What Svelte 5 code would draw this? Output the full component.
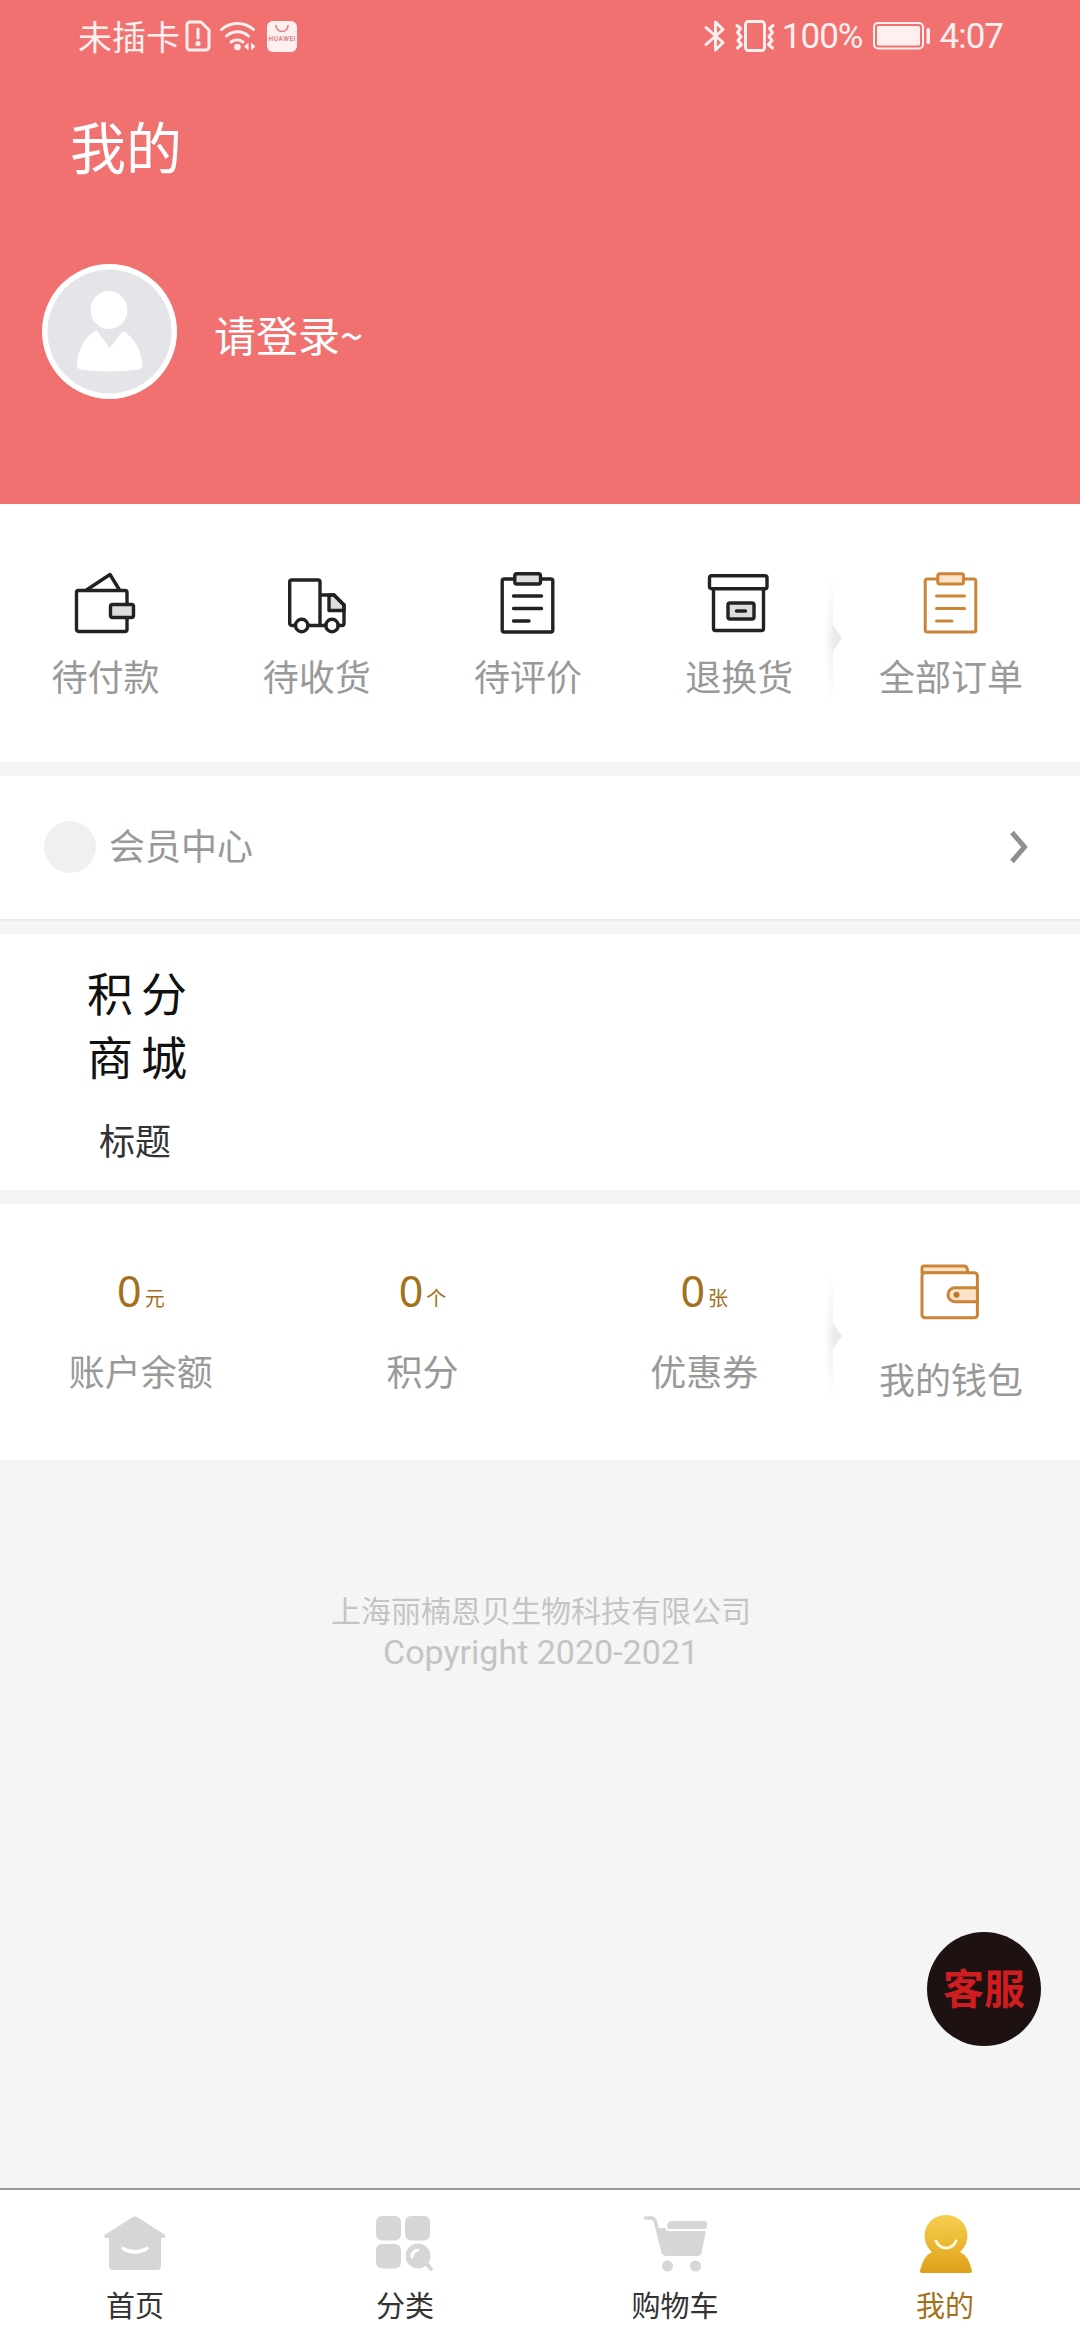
<script lang="ts">
  type Order = { icon: string; label: string };
  type Balance = { value: number; unit: string; label: string };

  const orders: Order[] = [
    { icon: 'pay', label: '待付款' },
    { icon: 'truck', label: '待收货' },
    { icon: 'clipboard', label: '待评价' },
    { icon: 'box', label: '退换货' }
  ];

  const balances: Balance[] = [
    { value: 0, unit: '元', label: '账户余额' },
    { value: 0, unit: '个', label: '积分' },
    { value: 0, unit: '张', label: '优惠券' }
  ];

  const tabs = [
    { icon: 'home', label: '首页' },
    { icon: 'category', label: '分类' },
    { icon: 'cart', label: '购物车' },
    { icon: 'me', label: '我的' }
  ];

  let current = $state('me');
</script>

{#snippet clipboard()}
  <path d="M18.8 9H8.2a2 2 0 0 0-2 2v49a2 2 0 0 0 2 2h46.6a2 2 0 0 0 2-2V11a2 2 0 0 0-2-2H44.5" />
  <rect class="tint" x="18.8" y="3.7" width="25.7" height="10.3" rx="2" />
  <path d="M17.5 26h28M17.5 38.5h28M17.5 51h15.5" />
{/snippet}

<div class="page">
  <header>
    <!-- System status bar -->
    <div class="status">
      <span>未插卡</span>
      <svg class="sim" width="26" height="34" viewBox="0 0 26 34">
        <path d="M5 3h11l8 8v17a3 3 0 0 1-3 3H5a3 3 0 0 1-3-3V6a3 3 0 0 1 3-3z" />
        <path d="M13 10v9" />
        <circle cx="13" cy="24.5" r="2.6" class="solid" />
      </svg>
      <svg class="wifi" width="38" height="34" viewBox="0 0 38 34">
        <path d="M2.5 10.5a24 24 0 0 1 32 0M7.5 17a16.5 16.5 0 0 1 22 0M12 23a10 10 0 0 1 12 0" />
        <circle cx="18.5" cy="28" r="3.3" class="solid" />
        <path class="solid" d="M29.5 23.5v8l-4.5-4zM32 23.5v8l4.5-4z" />
      </svg>
      <svg class="store" width="30" height="31" viewBox="0 0 30 31">
        <rect class="solid" width="30" height="31" rx="6" />
        <path d="M9 4.5a6 6 0 0 0 12 0" />
        <text x="15" y="20" text-anchor="middle" textLength="27">HUAWEI</text>
      </svg>

      <svg class="bt" width="22" height="34" viewBox="0 0 22 34">
        <path d="M2 8.5l17 15L11.5 31V3L19 10.5l-17 15" />
      </svg>
      <svg class="vibrate" width="40" height="34" viewBox="0 0 40 34">
        <rect x="10.5" y="2.5" width="19" height="29" rx="3" />
        <path d="M2 6.5l3.5 3-3 4 3.5 4-3 4 3.5 4-4 3.5M38 6.5l-3.5 3 3 4-3.5 4 3 4-3.5 4 4 3.5" />
      </svg>
      <span class="percent">100%</span>
      <svg class="battery" width="58" height="28" viewBox="0 0 58 28">
        <rect x="1" y="1" width="49" height="25.5" rx="4" class="case" />
        <rect x="4" y="4" width="43" height="19.5" rx="1.5" class="solid" />
        <rect x="53.5" y="6" width="3.5" height="16" rx="1.5" class="solid" />
      </svg>
      <span class="clock">4:07</span>
    </div>

    <h1>我的</h1>

    <div class="profile">
      <svg width="135" height="135" viewBox="0 0 135 135">
        <circle cx="67.5" cy="67.5" r="67.5" fill="#fff" />
        <circle cx="67.5" cy="67.5" r="62" fill="#e5e4e8" />
        <ellipse cx="67" cy="46" rx="18.5" ry="19" fill="#fff" />
        <path d="M54.5 66L67.5 84 81 67c12 7 18 19 19.5 34q0 4-4 4.500-29 4-58 0-4-1-3.500-5C36 84 43 73 54.500 66z" fill="#fff" />
      </svg>
      <span>请登录~</span>
    </div>
  </header>

  <section class="split orders">
    <div class="items">
      {#each orders as order}
        <div class="item">
          <svg class="line" width="64" height="64" viewBox="0 0 64 64">
            {#if order.icon === 'pay'}
              <path d="M12.5 20L36 4.5 45.5 20" />
              <rect x="2.5" y="20.5" width="50.5" height="41" rx="2" />
              <rect class="tint" x="36.5" y="34.5" width="23" height="13" rx="2" />
            {:else if order.icon === 'truck'}
              <path class="tint" d="M44 25h5L59 35v5.5H44z" />
              <path d="M10.5 55.5H6.7a2 2 0 0 1-2-2V12a2 2 0 0 1 2-2H33a2 2 0 0 1 2 2v43.5M23 55.5h18M35 25h14l10 10v18.5a2 2 0 0 1-2 2h-4" />
              <circle cx="16.7" cy="55.5" r="6.2" />
              <circle cx="47" cy="55.5" r="6.2" />
            {:else if order.icon === 'clipboard'}
              {@render clipboard()}
            {:else}
              <path d="M6.5 19v39.5a2 2 0 0 0 2 2h46a2 2 0 0 0 2-2V19" />
              <rect x="2.5" y="5.7" width="57.5" height="13" rx="2" />
              <rect class="tint" x="21" y="33" width="26" height="16" rx="2" />
              <path d="M29.5 41h9" />
            {/if}
          </svg>
          <span>{order.label}</span>
        </div>
      {/each}
    </div>
    <i class="divider"></i>
    <div class="item all">
      <svg class="line gold" width="64" height="64" viewBox="0 0 64 64">
        {@render clipboard()}
      </svg>
      <span>全部订单</span>
    </div>
  </section>

  <section class="member">
    <i class="badge"></i>
    <span>会员中心</span>
    <svg width="20" height="36" viewBox="0 0 20 36">
      <path d="M3 3.5l12.5 14.5L3 32.5" fill="none" stroke="#8f8f8f" stroke-width="5" />
    </svg>
  </section>

  <section class="shop">
    <div class="entry">
      <p class="brush">积分<br />商城</p>
      <span>标题</span>
    </div>
  </section>

  <section class="split wallet">
    <div class="items">
      {#each balances as b}
        <div class="balance">
          <p><b>{b.value}</b><small>{b.unit}</small></p>
          <span>{b.label}</span>
        </div>
      {/each}
    </div>
    <i class="divider"></i>
    <div class="item all">
      <svg class="line gold" width="64" height="64" viewBox="0 0 64 64">
        <path class="tint" d="M3 13V8a2 2 0 0 1 2-2h40q3 0 3.5 4v3z" />
        <rect x="3" y="12.7" width="55.4" height="45" rx="3" fill="#fff" />
        <path class="tint" d="M58.4 27.7H36a7 7 0 0 0 0 14h22.4z" />
        <circle class="dot" cx="37.5" cy="34.7" r="3" />
      </svg>
      <span>我的钱包</span>
    </div>
  </section>

  <footer>
    <p>上海丽楠恩贝生物科技有限公司</p>
    <p class="copy">Copyright 2020-2021</p>
  </footer>

  <nav>
    {#each tabs as tab}
      <button class:active={current === tab.icon} onclick={() => (current = tab.icon)}>
        <svg width="64" height="60" viewBox="0 0 64 60" fill="#d6d6d6">
          {#if tab.icon === 'home'}
            <path d="M29 4.5q3-2 6 0l27 17.5q1.5 2-1 3H58v28q0 4-4 4H10q-4 0-4-4V25H2.5q-2-1-1-3z" />
            <path d="M20 35.5q12 7 24 0" fill="none" stroke="#fff" stroke-width="3.5" stroke-linecap="round" />
          {:else if tab.icon === 'category'}
            <rect x="3" y="3" width="25" height="24.5" rx="6" />
            <rect x="32" y="3" width="25" height="24.5" rx="6" />
            <rect x="3" y="31" width="25" height="24.5" rx="6" />
            <circle cx="45" cy="43" r="12.5" />
            <path d="M53 50l5 6" stroke="#d6d6d6" stroke-width="4" stroke-linecap="round" />
            <path d="M39 44q0-6 6-7" fill="none" stroke="#fff" stroke-width="3" stroke-linecap="round" />
          {:else if tab.icon === 'cart'}
            <g transform="translate(1.5 0)">
              <path d="M1 5h5q4 0 5 4l8 31" fill="none" stroke="#d6d6d6" stroke-width="3.5" stroke-linecap="round" />
              <path d="M23 11q1-3 4-3h33q3 0 2.500 3l-.5 4q-1 1-3 1H24q-2-1-1-5z" />
              <path d="M12.5 15H21q0 3 4 3h36.500L57 40q-1 3-4 3H22q-3 0-4-3z" />
              <circle cx="23" cy="53" r="5.5" />
              <circle cx="51" cy="53" r="5.5" />
            </g>
          {:else}
            <linearGradient id="sun" x1="0" y1="0" x2="0" y2="1">
              <stop offset="0" stop-color="#f6cf4e" />
              <stop offset="1" stop-color="#dfa01c" />
            </linearGradient>
            <path d="M33 2a21 21 0 0 1 14 37q9 4 12 19 0 2-3 2H10q-3 0-3-2 3-15 12-19A21 21 0 0 1 33 2z" fill="url(#sun)" />
            <path d="M23 28q3 7 10 7t10-7" fill="none" stroke="#fff8dc" stroke-width="3" stroke-linecap="round" />
          {/if}
        </svg>
        <span>{tab.label}</span>
      </button>
    {/each}
  </nav>

  <button class="service">客服</button>
</div>

<style>
  :global(body) {
    margin: 0;
  }

  .page {
    position: relative;
    display: flex;
    flex-direction: column;
    width: 1080px;
    height: 2340px;
    overflow: hidden;
    background: #f5f5f5;
    font-family: 'Noto Sans CJK SC', sans-serif;
    font-size: 36px;
    color: #999;
  }

  p,
  h1 {
    margin: 0;
    font-weight: 400;
  }

  svg {
    display: block;
    flex: none;
  }

  header {
    height: 504px;
    background: #f07170;
    color: #fff;
  }

  .status {
    display: flex;
    align-items: center;
    height: 72px;
    padding: 0 77px 0 78px;
    font-size: 34px;
    line-height: 72px;
    color: #fff0ef;
  }

  .status svg {
    fill: none;
    stroke: #fff0ef;
    stroke-width: 3;
    stroke-linecap: round;
    stroke-linejoin: round;
  }

  .status .solid {
    fill: #fff0ef;
    stroke: none;
  }

  .sim {
    margin-left: 5px;
  }

  .wifi {
    margin-left: 8px;
  }

  .store {
    margin-left: 10px;
  }

  .store path {
    stroke: #e87c7f;
    stroke-width: 1.6;
  }

  .store text {
    font: 700 6.5px Roboto, sans-serif;
    fill: #d98488;
    stroke: none;
  }

  .bt {
    margin-left: auto;
  }

  .vibrate {
    margin-left: 9px;
  }

  .percent,
  .clock {
    padding-top: 2px;
    font-family: Roboto, sans-serif;
    font-size: 35px;
    letter-spacing: -1px;
  }

  .percent {
    margin-left: 7px;
  }

  .battery {
    margin-left: 10px;
  }

  .status .case {
    stroke-width: 2;
  }

  .clock {
    margin-left: 9px;
  }

  h1 {
    margin-left: 70px;
    padding-top: 33px;
    font-size: 56px;
    line-height: 80px;
  }

  .profile {
    display: flex;
    align-items: center;
    gap: 37px;
    margin: 79px 0 0 42px;
    font-size: 42px;
  }

  .profile span {
    padding-top: 4px;
  }

  section {
    flex: none;
    box-sizing: border-box;
    background: #fff;
  }

  .split {
    display: flex;
    height: 258px;
    padding-right: 23px;
  }

  .items {
    display: flex;
    width: 845px;
  }

  .item {
    display: flex;
    flex: 1;
    flex-direction: column;
    align-items: center;
    padding-top: 66px;
  }

  .item span {
    margin-top: 14px;
    line-height: 54px;
  }

  .line {
    fill: none;
    stroke: #222;
    stroke-width: 3.4;
    stroke-linecap: round;
    stroke-linejoin: round;
  }

  .line .tint {
    fill: #dedede;
  }

  .gold {
    stroke: #cb8538;
    stroke-width: 3;
  }

  .gold .tint {
    fill: #fbe2c8;
  }

  .gold .dot {
    fill: #b87a2c;
    stroke: none;
  }

  /* Soft vertical edge with a small pointer in the middle */
  .divider {
    position: relative;
    width: 10px;
    height: 130px;
    margin: 70px 0 0 -22px;
    background: radial-gradient(ellipse 9px 65px at 100% 50%, #efeff0, #fff);
  }

  .divider::after {
    content: '';
    position: absolute;
    left: 10px;
    top: 51px;
    border: solid transparent;
    border-width: 13px 0 13px 9px;
    border-left-color: #ebebec;
  }

  .all {
    margin-left: 12px;
  }

  .member {
    display: flex;
    align-items: center;
    height: 145px;
    margin-top: 14px;
    padding: 0 51px 1px 44px;
    border-bottom: 2px solid #ececec;
  }

  .member span {
    padding-bottom: 6px;
  }

  .badge {
    width: 52px;
    height: 52px;
    margin-right: 13px;
    border-radius: 50%;
    background: #f0f0f0;
  }

  .member svg {
    margin-left: auto;
  }

  .shop {
    height: 256px;
    margin-top: 13px;
  }

  .entry {
    width: 270px;
    padding-top: 25px;
    text-align: center;
    color: #333;
  }

  .brush {
    margin: 0 0 25px 12px;
    font-family: KaiTi, STKaiti, 'Noto Sans CJK SC', serif;
    font-size: 46px;
    line-height: 64px;
    letter-spacing: 8px;
    color: #111;
  }

  .entry span {
    display: block;
    line-height: 54px;
  }

  .wallet {
    height: 256px;
    margin-top: 14px;
  }

  .wallet .item {
    padding-top: 56px;
  }

  .wallet .item span {
    margin-top: 27px;
  }

  .wallet .divider {
    margin-top: 68px;
  }

  .balance {
    flex: 1;
    text-align: center;
  }

  .balance p {
    height: 60px;
    margin-top: 57px;
    line-height: 60px;
    color: #a3711c;
  }

  .balance b {
    margin-right: 3px;
    font: 400 43px 'Noto Sans', sans-serif;
  }

  .balance small {
    font-size: 20px;
    vertical-align: 1px;
  }

  .balance span {
    display: block;
    margin-top: 22px;
    line-height: 54px;
  }

  footer {
    flex: 1;
    padding: 128px 0 0 2px;
    text-align: center;
    font-size: 30px;
    line-height: 42px;
    color: #c4c4c4;
  }

  .copy {
    padding-top: 1px;
    font-family: Roboto, sans-serif;
    font-size: 34px;
  }

  nav {
    display: flex;
    flex: none;
    box-sizing: border-box;
    height: 152px;
    border-top: 2px solid #999;
    background: #fff;
  }

  nav button {
    display: flex;
    flex: 1;
    flex-direction: column;
    align-items: center;
    padding: 23px 0 0;
    border: 0;
    background: none;
    font: inherit;
    font-size: 29px;
    line-height: 44px;
    color: #333;
  }

  nav button.active {
    color: #a3711c;
  }

  nav span {
    margin-top: 9px;
  }

  /* Floating customer service entry */
  .service {
    position: absolute;
    right: 39px;
    bottom: 294px;
    width: 114px;
    height: 114px;
    padding: 0 0 5px;
    border: 0;
    border-radius: 50%;
    background: #1e1112;
    font: 700 41px/109px 'Noto Sans CJK SC', sans-serif;
    color: #cf1d20;
  }
</style>
